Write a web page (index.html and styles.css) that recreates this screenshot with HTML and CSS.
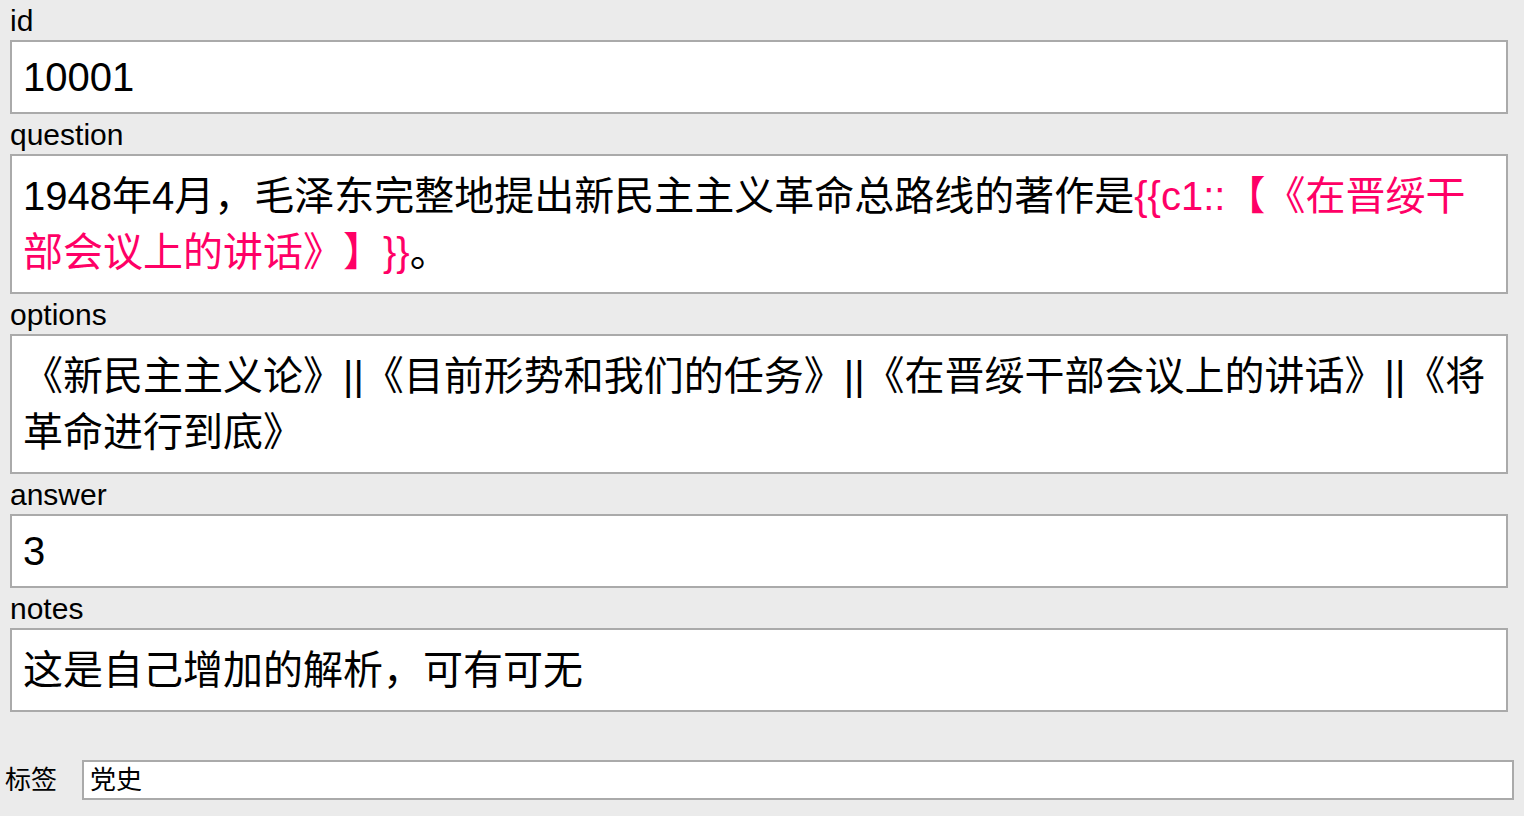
FILE: index.html
```html
<!DOCTYPE html>
<html lang="zh">
<head>
<meta charset="utf-8">
<title>Editor</title>
<link rel="stylesheet" href="styles.css">
</head>
<body>
<div class="fields">
  <div class="field-group">
    <div class="field-label">id</div>
    <div class="field latin">10001</div>
  </div>
  <div class="field-group">
    <div class="field-label">question</div>
    <div class="field cjk">1948年4月，毛泽东完整地提出新民主主义革命总路线的著作是<span class="cloze">{{c1::【《在晋绥干部会议上的讲话》】}}</span>。</div>
  </div>
  <div class="field-group">
    <div class="field-label">options</div>
    <div class="field cjk">《新民主主义论》||《目前形势和我们的任务》||《在晋绥干部会议上的讲话》||《将革命进行到底》</div>
  </div>
  <div class="field-group">
    <div class="field-label">answer</div>
    <div class="field latin">3</div>
  </div>
  <div class="field-group">
    <div class="field-label">notes</div>
    <div class="field cjk">这是自己增加的解析，可有可无</div>
  </div>
</div>
<div class="tags-row">
  <div class="tags-label">标签</div>
  <div class="tags-box">党史</div>
</div>
</body>
</html>
```
FILE: styles.css
```css
html, body {
  margin: 0;
  padding: 0;
  background: #ebebeb;
  height: 100%;
}
body {
  font-family: "Liberation Sans", "Noto Sans CJK SC", sans-serif;
  color: #000;
  overflow: hidden;
  text-spacing-trim: space-all;
}
.fields {
  padding: 0 16px 0 10px;
}
.field-label {
  font-size: 30px;
  line-height: 34px;
  padding: 4px 0 2px 0;
}
.field {
  background: #fff;
  border: 2px solid #aaaaaa;
  padding: 12px 11px 12px 11px;
  font-size: 40px;
  word-break: break-all;
  text-spacing-trim: space-all;
}
.field.latin {
  line-height: 46px;
}
.field.cjk {
  line-height: 56px;
}
.cloze {
  color: #ff0066;
}
.tags-row {
  display: flex;
  align-items: center;
  gap: 25px;
  margin-top: 48px;
  padding: 0 10px 0 5px;
}
.tags-label {
  font-size: 26px;
  line-height: 36px;
  white-space: nowrap;
}
.tags-box {
  flex: 1;
  background: #fff;
  border: 2px solid #aaaaaa;
  height: 36px;
  line-height: 36px;
  font-size: 26px;
  padding: 0 6px;
}
```
